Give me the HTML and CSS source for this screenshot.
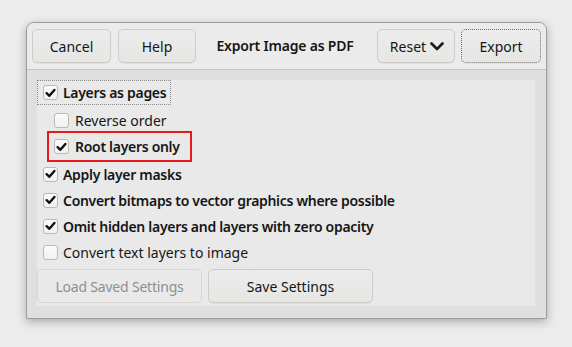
FILE: index.html
```html
<!DOCTYPE html>
<html>
<head>
<meta charset="utf-8">
<link rel="stylesheet" href="styles.css">
</head>
<body>
<div class="window">
  <div class="header">
    <button class="btn hbtn cancel">Cancel</button>
    <button class="btn hbtn help">Help</button>
    <div class="title">Export Image as PDF</div>
    <button class="btn hbtn reset">Reset
      <svg class="chev" width="14" height="9" viewBox="0 0 14 9"><polyline points="1.5,1.5 7,7 12.5,1.5" fill="none" stroke="#1a1a1a" stroke-width="2.6" stroke-linecap="round" stroke-linejoin="round"/></svg>
    </button>
    <button class="btn hbtn export">Export</button>
  </div>
  <div class="body">
    <div class="panel">
      <div class="row focus"><span class="cb on"><svg width="14" height="14" viewBox="0 0 14 14"><polyline points="2.8,7.2 5.8,10 11.2,3.8" fill="none" stroke="#111" stroke-width="2.6" stroke-linecap="round" stroke-linejoin="round"/></svg></span><span class="lbl b">Layers as pages</span></div>
      <div class="row sub"><span class="cb"></span><span class="lbl">Reverse order</span></div>
      <div class="row hl"><span class="cb on"><svg width="14" height="14" viewBox="0 0 14 14"><polyline points="2.8,7.2 5.8,10 11.2,3.8" fill="none" stroke="#111" stroke-width="2.6" stroke-linecap="round" stroke-linejoin="round"/></svg></span><span class="lbl b">Root layers only</span></div>
      <div class="row main first"><span class="cb on"><svg width="14" height="14" viewBox="0 0 14 14"><polyline points="2.8,7.2 5.8,10 11.2,3.8" fill="none" stroke="#111" stroke-width="2.6" stroke-linecap="round" stroke-linejoin="round"/></svg></span><span class="lbl b">Apply layer masks</span></div>
      <div class="row main"><span class="cb on"><svg width="14" height="14" viewBox="0 0 14 14"><polyline points="2.8,7.2 5.8,10 11.2,3.8" fill="none" stroke="#111" stroke-width="2.6" stroke-linecap="round" stroke-linejoin="round"/></svg></span><span class="lbl b">Convert bitmaps to vector graphics where possible</span></div>
      <div class="row main"><span class="cb on"><svg width="14" height="14" viewBox="0 0 14 14"><polyline points="2.8,7.2 5.8,10 11.2,3.8" fill="none" stroke="#111" stroke-width="2.6" stroke-linecap="round" stroke-linejoin="round"/></svg></span><span class="lbl b">Omit hidden layers and layers with zero opacity</span></div>
      <div class="row main"><span class="cb"></span><span class="lbl">Convert text layers to image</span></div>
      <div class="actions">
        <button class="btn abtn disabled">Load Saved Settings</button>
        <button class="btn abtn">Save Settings</button>
      </div>
    </div>
  </div>
</div>
</body>
</html>
```

FILE: styles.css
```css
* { box-sizing: border-box; }
html, body { margin: 0; padding: 0; }
body {
  background: #ececec;
  font-family: "Noto Sans", "DejaVu Sans", sans-serif;
  font-size: 14px;
  color: #161616;
  padding: 22px 0 0 26px;
  width: 572px;
  height: 347px;
  overflow: hidden;
}
.window {
  width: 521px;
  height: 297px;
  border: 1px solid #9c9c9c;
  border-radius: 8px 8px 1px 1px;
  background: #dfdfdf;
  box-shadow: 0 3px 10px rgba(0,0,0,0.28);
  display: flex;
  flex-direction: column;
  overflow: hidden;
}
.header {
  height: 47px;
  flex: none;
  background: #ebebeb;
  border-bottom: 1px solid #c4c4c4;
  display: flex;
  align-items: flex-start;
  padding: 6px 5px 0 5px;
}
.btn {
  font-family: inherit;
  font-size: 14px;
  color: #161616;
  background: linear-gradient(#ececec, #e6e6e5);
  border: 1px solid #cfcac5;
  border-radius: 5px;
  box-shadow: 0 1px 0 rgba(0,0,0,0.04);
  height: 34px;
  padding: 0;
  display: flex;
  align-items: center;
  justify-content: center;
}
.hbtn { flex: none; }
.cancel { width: 79px; }
.help { width: 78px; margin-left: 7px; }
.title {
  flex: 1;
  text-align: center;
  font-weight: 600;
  letter-spacing: -0.2px;
  line-height: 34px;
  padding-right: 3px;
}
.reset { width: 78px; gap: 4px; padding-left: 2px; }
.chev { display: block; margin-top: 1px; }
.export {
  width: 80px;
  margin-left: 6px;
  border: 1px dotted #6d6d6d;
  border-radius: 5px;
}
.body {
  flex: 1;
  padding: 10px 11px 12px 10px;
}
.panel {
  background: #e9e9e9;
  height: 100%;
  display: flex;
  flex-direction: column;
  align-items: flex-start;
}
.row {
  display: flex;
  align-items: center;
  white-space: nowrap;
}
.cb {
  width: 15px;
  height: 15px;
  border: 1px solid #bdb8b3;
  border-radius: 3px;
  background: linear-gradient(#fbfbfb, #f1f1f1);
  flex: none;
  display: flex;
  align-items: center;
  justify-content: center;
}
.cb svg { display: block; }
.lbl { margin-left: 5px; }
.b { font-weight: 600; letter-spacing: -0.3px; }
.focus {
  height: 25px;
  border: 1px dotted #8a8a8a;
  padding: 0 4px 0 5px;
}
.sub {
  height: 24px;
  margin-top: 3px;
  padding-left: 17px;
}
.sub .lbl { margin-left: 6px; }
.hl {
  height: 31px;
  margin-left: 10px;
  margin-top: -1px;
  width: 145px;
  border: 2px solid #e8191c;
  padding-left: 5px;
}
.hl .lbl { margin-left: 6px; }
.main {
  height: 26px;
  padding-left: 6px;
}
.first { margin-top: -1px; }
.actions {
  display: flex;
  gap: 6px;
  margin-top: 4px;
}
.abtn { width: 165px; }
.abtn.disabled {
  color: #8e9091;
  border-color: #d8d4d0;
  background: #e9e9e9;
  box-shadow: none;
  letter-spacing: -0.2px;
}
```
